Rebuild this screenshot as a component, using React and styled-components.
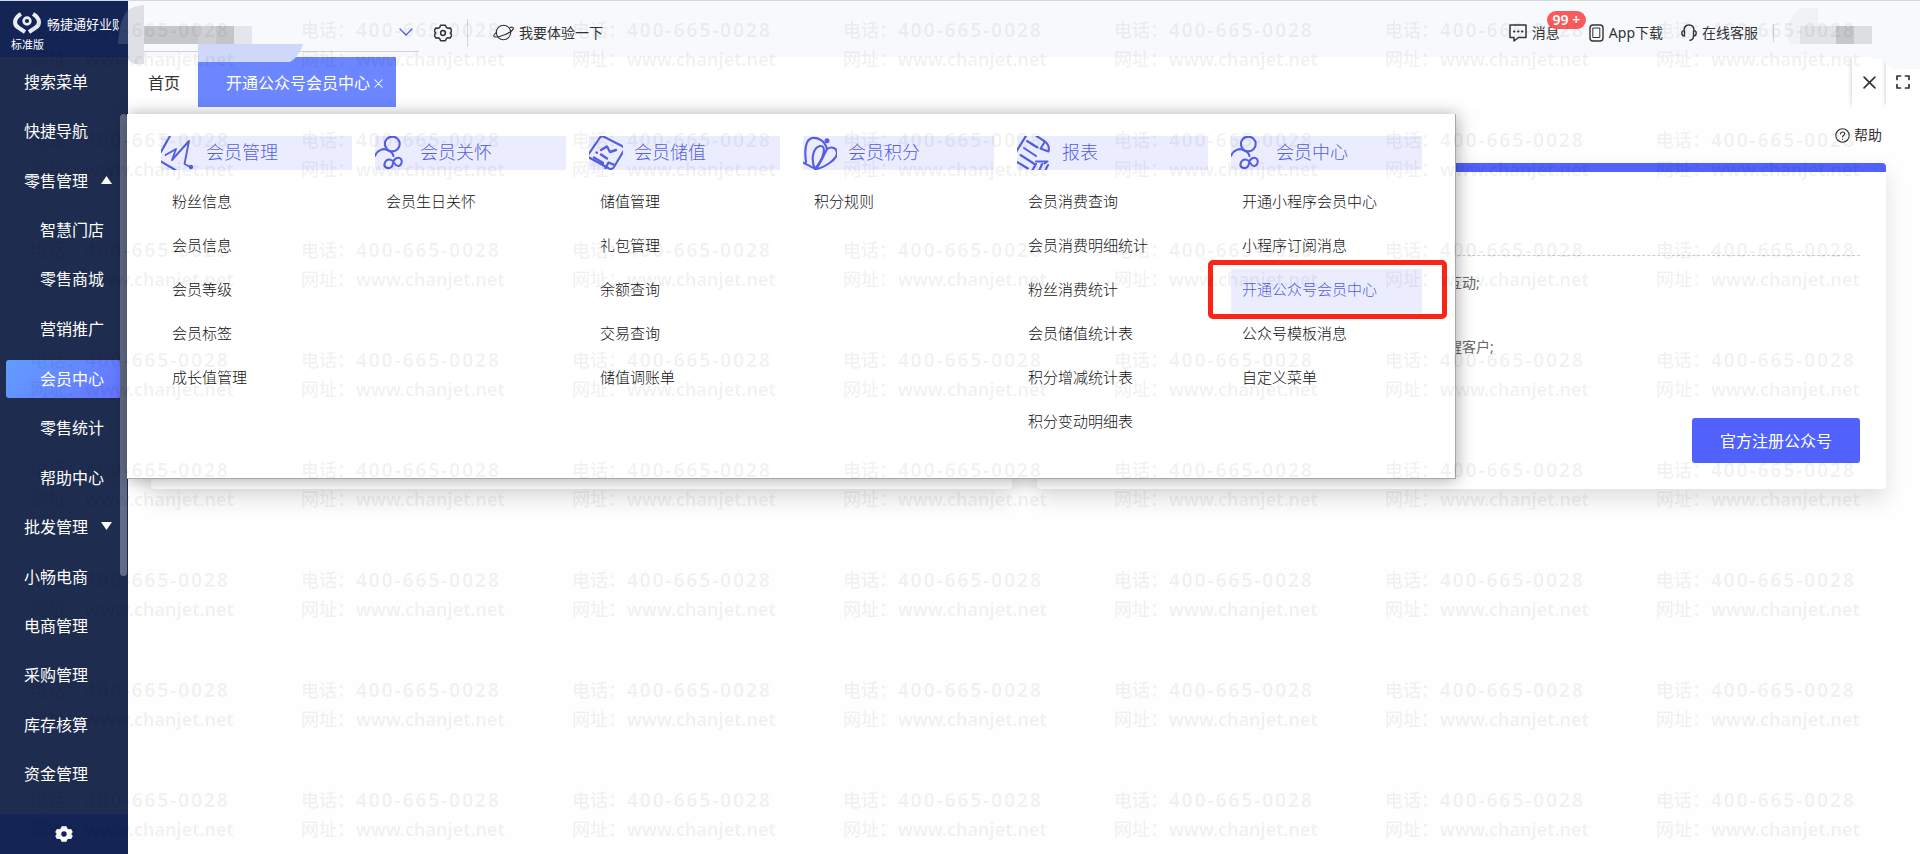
import React from "react";
import styled, {createGlobalStyle, css} from "styled-components";

const colors = {
    navy: "#132455",
    navyBody: "#1e2c4f",
    primary: "#5061fc",
    tab: "#6b86ff",
    link: "#535ee0",
    tint: "#ebedff",
    text: "#333333",
    danger: "#fb5a5c",
    frame: "#fb2416",
};

const GlobalStyle = createGlobalStyle`
  * {
    box-sizing: border-box;
  }
  body {
    margin: 0;
    background: #fefefe;
    color: ${colors.text};
    font-family: "Noto Sans", "Noto Sans CJK SC", sans-serif;
    font-size: 14px;
  }
  button {
    border: 0;
    padding: 0;
    background: none;
    color: inherit;
    font: inherit;
    cursor: pointer;
  }
  a {
    color: inherit;
    text-decoration: none;
  }
  ul {
    margin: 0;
    padding: 0;
    list-style: none;
  }
  svg {
    display: block;
    flex: none;
  }
`;

const Layout = styled.div`
  position: relative;
  display: flex;
  min-height: 100vh;
`;

/* sidebar */

const Sidebar = styled.aside`
  position: relative;
  display: flex;
  flex: none;
  flex-direction: column;
  width: 128px;
  background: ${colors.navyBody};
  color: #fff;
`;

const Brand = styled.div`
  height: 57px;
  padding: 10px 0 0 13px;
  border-top: 1px solid #d3dbe8;
  background: ${colors.navy};
`;

const BrandRow = styled.div`
  display: flex;
  align-items: center;
  gap: 6px;
  width: 106px;
  height: 24px;
  overflow: hidden;
  white-space: nowrap;
  font-size: 13px;
`;

const Edition = styled.div`
  margin-left: -2px;
  font-size: 11px;
  line-height: 20px;
`;

const Nav = styled.nav`
  display: flex;
  flex: 1;
  flex-direction: column;
  padding-bottom: 15px;
`;

const NavItem = styled.a`
  display: flex;
  flex: 1;
  align-items: center;
  justify-content: space-between;
  padding: 0 16px 2px ${({$sub}) => ($sub ? "40px" : "24px")};
  font-size: 16px;
  white-space: nowrap;
  ${({$active}) => $active && css`
    flex: none;
    height: 38px;
    margin: 6px 7px 6px 6px;
    padding: 0 0 2px 34px;
    border-radius: 3px;
    background: linear-gradient(135deg, #639dff, #6474ff);
  `}
`;

const Scrollbar = styled.div`
  position: absolute;
  top: 114px;
  right: 1px;
  width: 7px;
  height: 462px;
  border-radius: 4px;
  background: #626b85;
`;

const SidebarFooter = styled.button`
  display: flex;
  align-items: center;
  justify-content: center;
  height: 40px;
  background: ${colors.navy};
`;

/* top bar */

const Main = styled.div`
  flex: 1;
  min-width: 0;
`;

const TopBar = styled.header`
  position: relative;
  display: flex;
  align-items: center;
  height: 57px;
  padding: 8px 28px 0 16px;
  border-top: 1px solid #d6d8de;
  background: #f7f9fd;
`;

const CompanyPicker = styled.button`
  display: flex;
  align-items: center;
  justify-content: flex-end;
  width: 275px;
  height: 38px;
  padding: 0 6px 2px 0;
  border-bottom: 1px solid #cfd1d6;
`;

const IconButton = styled.button`
  display: flex;
  margin-left: 15px;
`;

const Divider = styled.span`
  width: 1px;
  height: ${({$tall}) => ($tall ? "28px" : "18px")};
  margin: 0 ${({$tall}) => ($tall ? "25px" : "14px")} 0 15px;
  background: #cfd2d9;
`;

const TopLink = styled.a`
  position: relative;
  display: flex;
  align-items: center;
  gap: 5px;
  line-height: 20px;
`;

const TopTools = styled.div`
  display: flex;
  align-items: center;
  gap: 18px;
  margin-left: auto;
`;

const MessageLink = styled(TopLink)`
  margin-right: 11px;
`;

const Badge = styled.span`
  position: absolute;
  top: -12px;
  left: 38px;
  width: 39px;
  height: 18px;
  border-radius: 9px;
  background: ${colors.danger};
  color: #fff;
  font-size: 14px;
  font-weight: 600;
  line-height: 18px;
  text-align: center;
`;

const UserSlot = styled.div`
  width: 104px;
`;

/* pixelated cover over the company name and the user name */
const Cover = styled.svg`
  position: absolute;
  z-index: 3;
  top: 0;
  ${({$right}) => ($right ? "right: 0;" : "left: 116px;")}
  pointer-events: none;
`;

/* tab strip */

const TabStrip = styled.div`
  display: flex;
  height: 50px;
  padding-left: 20px;
  background: #fff;
  font-size: 16px;
`;

const HomeTab = styled.button`
  width: 50px;
  text-align: left;
`;

const Tab = styled.div`
  display: flex;
  align-items: center;
  gap: 4px;
  padding: 0 13px 0 28px;
  background: ${colors.tab};
  color: #fff;
`;

const TabClose = styled.button`
  display: flex;
  padding-top: 3px;
`;

const StripActions = styled.div`
  display: flex;
  margin-left: auto;
`;

const StripButton = styled.button`
  display: flex;
  align-items: center;
  justify-content: center;
  width: 34px;
  box-shadow: -3px 0 4px -2px rgba(0, 0, 0, 0.16);
  clip-path: inset(0 0 0 -8px);
`;

/* page */

const Page = styled.main`
  padding: 18px 34px 0 23px;
`;

const HelpRow = styled.div`
  display: flex;
  justify-content: flex-end;
  padding-right: 4px;
`;

const HelpLink = styled.a`
  display: flex;
  align-items: center;
  gap: 4px;
  line-height: 20px;
`;

const Cards = styled.div`
  display: grid;
  grid-template-columns: 71fr 70fr;
  gap: 25px;
  margin-top: 18px;
`;

const Card = styled.section`
  display: flex;
  flex-direction: column;
  height: 326px;
  padding: 0 26px 26px;
  border-top: 9px solid ${colors.primary};
  border-radius: 4px;
  background: #fff;
  box-shadow: 0 10px 22px rgba(0, 0, 0, 0.12);
`;

const CardHead = styled.div`
  height: 84px;
  border-bottom: 1px dashed #cccccc;
`;

const Points = styled.ul`
  padding: 5px 0 0 385px;
  color: #666;
`;

const Point = styled.li`
  height: 64px;
  line-height: 44px;
`;

const RegisterButton = styled.button`
  width: 168px;
  height: 45px;
  margin-top: auto;
  margin-left: auto;
  padding-bottom: 2px;
  border-radius: 3px;
  background: ${colors.primary};
  color: #fff;
  font-size: 16px;
`;

/* fly-out menu */

const MegaMenu = styled.div`
  position: absolute;
  z-index: 2;
  top: 114px;
  left: 127px;
  display: grid;
  grid-template-columns: repeat(6, 191px);
  gap: 23px;
  padding: 22px 33px 33px 34px;
  border-right: 1px solid #a8a8a8;
  border-bottom: 1px solid #a8a8a8;
  background: #fff;
  box-shadow: 1px 1px 16px rgba(0, 0, 0, 0.34);
`;

const MenuTitle = styled.h2`
  display: flex;
  gap: 11px;
  height: 34px;
  margin: 0 0 11px;
  background: ${colors.tint};
  color: ${colors.link};
  font-size: 18px;
  font-weight: 300;
  line-height: 32px;
`;

const MenuLink = styled.a`
  position: relative;
  display: block;
  height: 44px;
  padding-left: 11px;
  font-size: 15px;
  font-weight: 300;
  line-height: 40px;
  white-space: nowrap;
  color: #111;
  ${({$active}) => $active && css`
    background: ${colors.tint};
    color: ${colors.link};
    &::after {
      content: "";
      position: absolute;
      inset: -9px -25px -6px -23px;
      border: 5px solid ${colors.frame};
      border-radius: 5px;
    }
  `}
`;

/* watermark */

const WatermarkLayer = styled.div`
  position: fixed;
  z-index: 5;
  inset: 0;
  display: grid;
  grid-template-columns: repeat(7, 271px);
  grid-auto-rows: 110px;
  padding: 16px 0 0 30px;
  overflow: hidden;
  color: rgba(0, 0, 0, 0.055);
  font-size: 18px;
  font-weight: 500;
  line-height: 29px;
  pointer-events: none;
  user-select: none;
`;

const Contact = styled.div`
  display: grid;
  grid-template-columns: 55px auto;
  align-content: start;
  white-space: nowrap;
`;

const Phone = styled.span`
  font-size: 19px;
  font-weight: 600;
  letter-spacing: 2px;
`;

const Site = styled.span`
  font-weight: 600;
`;

const stroke = {fill: "none", stroke: "currentColor", strokeLinecap: "round", strokeLinejoin: "round"};

const LogoIcon = () => (
    <svg width="28" height="22" viewBox="0 0 28 22" fill="none" stroke="#e9edf5" strokeWidth="4">
        <path d="M8 2C1 6 0 13 6 16l6 4"/>
        <path d="M20 2c7 4 8 11 2 14l-6 4"/>
        <circle cx="14" cy="9" r="3.4" strokeWidth="2.6"/>
    </svg>
);

const gearPath = "M6.6 1.2h4.8l1 2.3 1.2.7 2.5-.3 1.7 3.1L16.3 9l1.5 2-1.7 3.1-2.5-.3-1.2.7-1 2.3H6.6l-1-2.3-1.2-.7-2.5.3L.2 11l1.5-2L.2 7l1.7-3.1 2.5.3 1.2-.7z";

const GearIcon = ({solid}) => (
    <svg width="18" height="18" viewBox="0 0 18 18" {...stroke} strokeWidth="1.5">
        {solid
            ? <path d={`${gearPath}M9 6.3a2.7 2.7 0 1 0 0 5.4a2.7 2.7 0 1 0 0-5.4z`} fill="currentColor" fillRule="evenodd" stroke="none"/>
            : <><path d={gearPath}/><circle cx="9" cy="9" r="2.4"/></>}
    </svg>
);

const PlanetIcon = () => (
    <svg width="21" height="18" viewBox="0 0 21 18" {...stroke} strokeWidth="1.1">
        <circle cx="10.5" cy="8.5" r="7.2"/>
        <path d="M17 3.5c2-.6 3.300-.4 3.400.4.300 1.800-4 5-9.400 7.200C5.800 13.200 1.200 13.700.8 12.200c-.3-.9.9-2.400 2.700-3.800"/>
    </svg>
);

const MessageIcon = () => (
    <svg width="18" height="18" viewBox="0 0 18 18" {...stroke} strokeWidth="1.5">
        <path d="M1 1h16v12.500H9.500L5 17v-3.500H1z"/>
        <path d="M5 7.500h.5M9 7.500h.5M13 7.500h.5" strokeWidth="2"/>
    </svg>
);

const PhoneIcon = () => (
    <svg width="15" height="18" viewBox="0 0 15 18" {...stroke} strokeWidth="1.4">
        <rect x="1" y="1" width="13" height="16" rx="3"/>
        <path d="M4.200 4h6.600v9.500H4.200z" strokeWidth="1"/>
    </svg>
);

const HeadsetIcon = () => (
    <svg width="16" height="18" viewBox="0 0 16 18" {...stroke} strokeWidth="1.4">
        <path d="M3.500 12C1.500 12 .8 10.500.8 9s1-2.400 2.200-2.400C3 3 5 1 8 1s5 2 5 5.600c1.200 0 2.200.9 2.200 2.400s-.7 3-2.700 3V7M3.500 7v5M12.500 12c0 2.500-1.200 4-3.500 4.300"/>
    </svg>
);

const ChevronIcon = () => (
    <svg width="14" height="8" viewBox="0 0 14 8" {...stroke} stroke={colors.link} strokeWidth="1.3">
        <path d="M1 1l6 6 6-6"/>
    </svg>
);

const CloseIcon = ({size, width}) => (
    <svg width={size} height={size} viewBox="0 0 12 12" {...stroke} strokeWidth={width}>
        <path d="M1 1l10 10M11 1L1 11"/>
    </svg>
);

const ExpandIcon = () => (
    <svg width="14" height="14" viewBox="0 0 14 14" {...stroke} strokeWidth="1.7">
        <path d="M1 4.500V1h3.500M9.500 1H13v3.500M13 9.500V13H9.500M4.500 13H1V9.500"/>
    </svg>
);

const HelpIcon = () => (
    <svg width="15" height="15" viewBox="0 0 15 15" {...stroke} strokeWidth="1.1">
        <circle cx="7.5" cy="7.5" r="6.7"/>
        <path d="M5.500 6c0-2.800 4.200-2.600 4.200-.2 0 1.500-2.200 1.500-2.200 3.200M7.500 11v.2"/>
    </svg>
);

const Caret = ({up}) => (
    <svg width="11" height="8" viewBox="0 0 11 8" fill="#fff">
        <path d={up ? "M5.500 0L11 8H0z" : "M0 0h11L5.500 8z"}/>
    </svg>
);

const drawings = {
    trend: (
        <>
            <path d="M9.500-1L0 16M0 25.500L16 35"/>
            <path d="M4.500 19l10.500-6-4 11L28 5l-4.500 23 5 2.500" strokeWidth="1.9"/>
            <circle cx="30" cy="31" r="2.2" fill="currentColor" stroke="none"/>
        </>
    ),
    people: (
        <>
            <circle cx="17.3" cy="8" r="7.4"/>
            <path d="M0 20C2 14 9 11.500 13 14.500c3 1 5 3 5.500 5.500"/>
            <path d="M18 27.500C18.500 22 23.500 20.500 26 23c2 3 0 7-3 7-3.500 0-4-6-8-6.500C10.500 23 7.500 29 11 31.500c3 1.500 6.500 0 7-4z"/>
        </>
    ),
    bill: (
        <>
            <path d="M-1 19L11 1.500q1.500-2 4-.7L33 10q3.500 2 1.500 5L25 31q-2 3-5 1.500L-1 21"/>
            <path d="M12 14l6-3.500 3 5.500 6-2M12 18.500l6 4M5 21.500l9 5.500M7.500 16.500l.4.2M16.500 32l3-5.500 5 2" strokeWidth="2.4"/>
        </>
    ),
    shell: (
        <>
            <path d="M0 26.500C3 28 8 31 13 33c7-1 21-9 21-16 0-5-5-7-10-4C22 5 15 1 9 2 1 4 2 18 3 26"/>
            <path d="M12 33C8 25 9 12 17 10c7-1 4 12-5 23zM13 33c4-5 8-14 11-20"/>
            <circle cx="24" cy="4.7" r="2.5" fill="currentColor" stroke="none"/>
        </>
    ),
    report: (
        <>
            <path d="M9.500-1L-1 16M10 5l10.500 6.500M7 12l12 8M3.500 19l14 9M0 26l11 6.500"/>
            <path d="M18-1l10 6.500q5 4 3.500 10l-8-3 4.500-7M19 25.500h11.500l-3 2M19 28l-4 7M25 28l-3 7M31 29l-3 6"/>
        </>
    ),
};

const MenuIcon = ({name}) => (
    <svg width="34" height="34" viewBox="0 0 34 34" {...stroke} strokeWidth="2.1">{drawings[name]}</svg>
);

const navItems = [
    {label: "搜索菜单"},
    {label: "快捷导航"},
    {label: "零售管理", caret: "up"},
    {label: "智慧门店", sub: true},
    {label: "零售商城", sub: true},
    {label: "营销推广", sub: true},
    {label: "会员中心", sub: true, active: true},
    {label: "零售统计", sub: true},
    {label: "帮助中心", sub: true},
    {label: "批发管理", caret: "down"},
    {label: "小畅电商"},
    {label: "电商管理"},
    {label: "采购管理"},
    {label: "库存核算"},
    {label: "资金管理"},
];

const menu = [
    {title: "会员管理", icon: "trend", links: ["粉丝信息", "会员信息", "会员等级", "会员标签", "成长值管理"]},
    {title: "会员关怀", icon: "people", links: ["会员生日关怀"]},
    {title: "会员储值", icon: "bill", links: ["储值管理", "礼包管理", "余额查询", "交易查询", "储值调账单"]},
    {title: "会员积分", icon: "shell", links: ["积分规则"]},
    {
        title: "报表",
        icon: "report",
        links: ["会员消费查询", "会员消费明细统计", "粉丝消费统计", "会员储值统计表", "积分增减统计表", "积分变动明细表"],
    },
    {
        title: "会员中心",
        icon: "people",
        links: ["开通小程序会员中心", "小程序订阅消息", "开通公众号会员中心", "公众号模板消息", "自定义菜单"],
    },
];

const current = "开通公众号会员中心";

const Watermark = () => (
    <WatermarkLayer aria-hidden="true">
        {Array.from({length: 56}, (_, i) => (
            <Contact key={i}>
                <span>电话：</span>
                <Phone>400-665-0028</Phone>
                <span>网址：</span>
                <Site>www.chanjet.net</Site>
            </Contact>
        ))}
    </WatermarkLayer>
);

const App = () => (
    <Layout>
        <GlobalStyle/>
        <Sidebar>
            <Brand>
                <BrandRow><LogoIcon/>畅捷通好业财</BrandRow>
                <Edition>标准版</Edition>
            </Brand>
            <Nav>
                {navItems.map(({label, sub, active, caret}) => (
                    <NavItem key={label} href="#" $sub={sub} $active={active}>
                        {label}
                        {caret && <Caret up={caret === "up"}/>}
                    </NavItem>
                ))}
            </Nav>
            <Scrollbar/>
            <SidebarFooter aria-label="设置"><GearIcon solid/></SidebarFooter>
        </Sidebar>

        <Main>
            <TopBar>
                <CompanyPicker aria-label="选择企业"><ChevronIcon/></CompanyPicker>
                <IconButton aria-label="设置"><GearIcon/></IconButton>
                <Divider $tall/>
                <TopLink href="#"><PlanetIcon/>我要体验一下</TopLink>
                <TopTools>
                    <MessageLink href="#"><MessageIcon/>消息<Badge>99 +</Badge></MessageLink>
                    <TopLink href="#"><PhoneIcon/>App下载</TopLink>
                    <TopLink href="#"><HeadsetIcon/>在线客服</TopLink>
                </TopTools>
                <Divider/>
                <UserSlot/>
            </TopBar>
            <TabStrip>
                <HomeTab>首页</HomeTab>
                <Tab>
                    {current}
                    <TabClose aria-label="关闭标签"><CloseIcon size="9" width="1.4"/></TabClose>
                </Tab>
                <StripActions>
                    <StripButton aria-label="关闭"><CloseIcon size="13" width="1.5"/></StripButton>
                    <StripButton aria-label="全屏"><ExpandIcon/></StripButton>
                </StripActions>
            </TabStrip>
            <Page>
                <HelpRow><HelpLink href="#"><HelpIcon/>帮助</HelpLink></HelpRow>
                <Cards>
                    <Card/>
                    <Card>
                        <CardHead/>
                        <Points>
                            <Point>互动;</Point>
                            <Point>醒客户;</Point>
                        </Points>
                        <RegisterButton>官方注册公众号</RegisterButton>
                    </Card>
                </Cards>
            </Page>
        </Main>

        <Cover width="190" height="70">
            <path d="M12 10v34H2q1-24 10-34z" fill="#d9dde4" fillOpacity="0.16"/>
            <path d="M28 5v59h-9q-5-1-7-5V10q6-4 16-5z" fill="#dde0e5"/>
            <path d="M28 26h54v18H28z" fill="#c6c7ca"/>
            <path d="M82 26h18v18H82z" fill="#cfd0d3"/>
            <path d="M100 26h18v18h-18z" fill="#c4c5c8"/>
            <path d="M118 26h18v18h-18z" fill="#e3e6ea"/>
            <path d="M82 44h105q-4 13-13 18H82z" fill="#cfd8fb"/>
        </Cover>
        <Cover $right width="190" height="70">
            <path d="M70 8h18v18H70v18H60q-9-18 10-36z" fill="#f1f2f5"/>
            <path d="M70 26h36v18H70z" fill="#e2e3e6"/>
            <path d="M106 26h18v18h-18z" fill="#c6c7ca"/>
            <path d="M124 26h18v18h-18z" fill="#dcdde1"/>
            <path d="M142 56h48v13h-20q-11 0-18-10h-10z" fill="#f7f9fd"/>
        </Cover>

        <MegaMenu>
            {menu.map(({title, icon, links}) => (
                <section key={title}>
                    <MenuTitle><MenuIcon name={icon}/>{title}</MenuTitle>
                    {links.map((link) => (
                        <MenuLink key={link} href="#" $active={link === current}>{link}</MenuLink>
                    ))}
                </section>
            ))}
        </MegaMenu>
        <Watermark/>
    </Layout>
);

export default App;
